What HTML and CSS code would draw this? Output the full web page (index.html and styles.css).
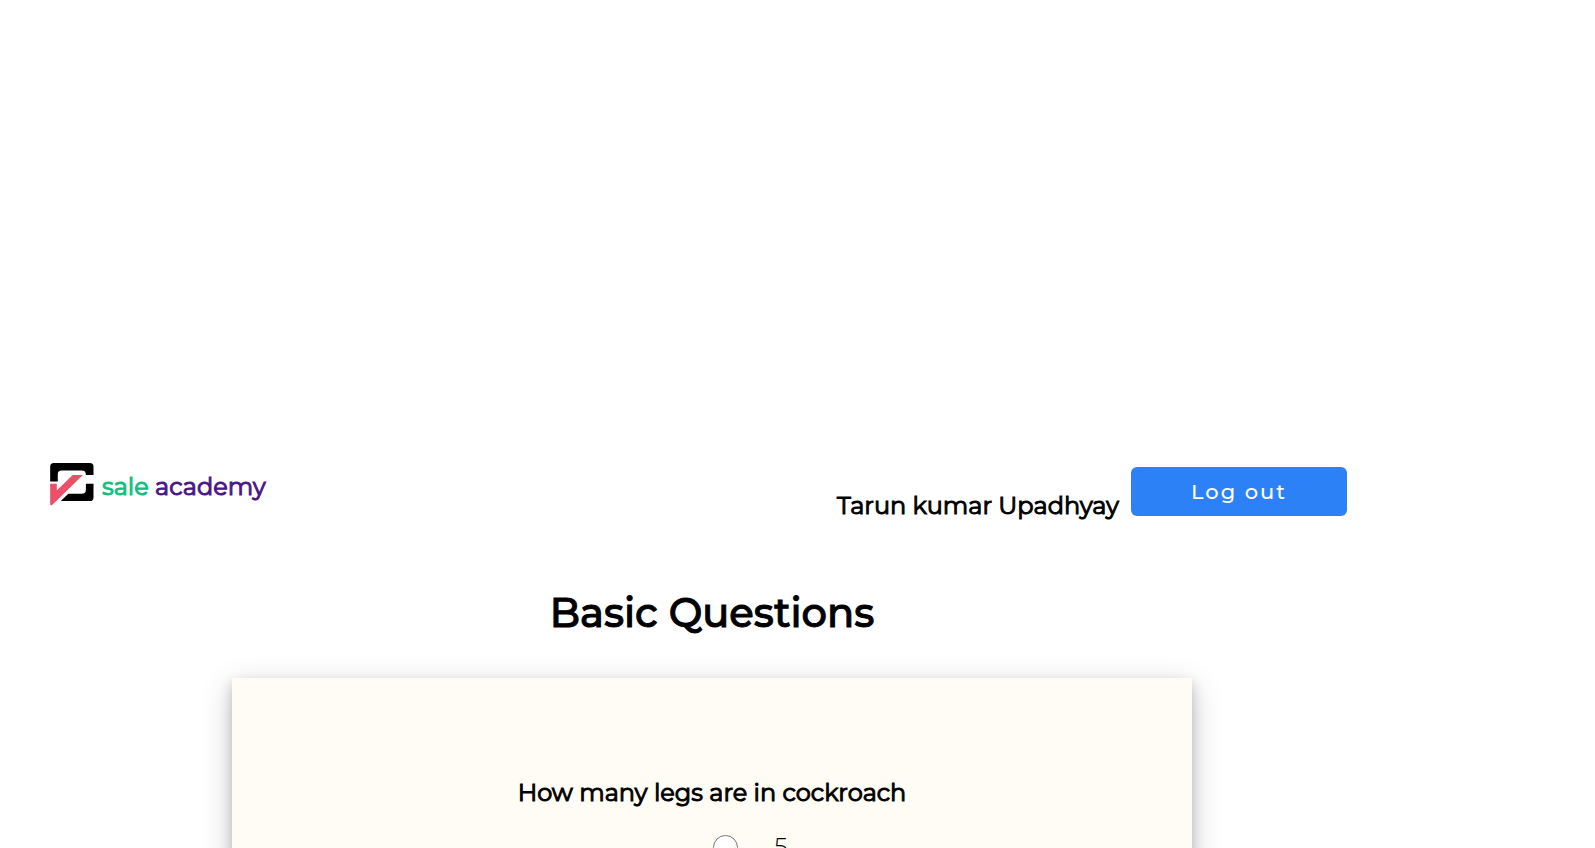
FILE: index.html
```html
<!DOCTYPE html>
<html lang="en">
<head>
<meta charset="utf-8">
<title>Sale Academy</title>
<meta name="viewport" content="width=device-width, initial-scale=1">
<link rel="stylesheet" href="styles.css">
</head>
<body>
<header class="header">
  <a class="brand" href="#">
    <svg class="brand-mark" viewBox="0 0 132 130" aria-hidden="true">
      <path fill="#000" d="M0 56V11Q0 0 11 0H120Q131 0 131 11V36H108Q108 23 96 23H34Q23 23 23 34V56Z"/>
      <path fill="#ec5068" d="M0 63H20V83L68 36H99L6 127Q0 130 0 124Z"/>
      <path fill="#000" d="M32 115L55 93H96Q108 93 108 81V63H131V104Q131 115 120 115Z"/>
    </svg>
    <span class="brand-name"><span class="brand-accent">sale</span> academy</span>
  </a>
  <div class="account">
    <span class="user-name">Tarun kumar Upadhyay</span>
    <button class="logout" type="button">Log out</button>
  </div>
</header>
<main class="main">
  <h1 class="title">Basic Questions</h1>
  <fieldset class="card">
    <legend class="question">How many legs are in cockroach</legend>
    <label class="option"><input class="radio" type="radio" name="legs" value="5"><span>5</span></label>
  </fieldset>
</main>
</body>
</html>
```
FILE: styles.css
```css
* {
  box-sizing: border-box;
}

html {
  overflow: hidden;
}

body {
  margin: 0;
  padding: 463px 171px 0 0;
  background: #fff;
  color: #000;
  font-family: Montserrat, Inter, sans-serif;
  font-size: 24px;
}

.header {
  display: flex;
  justify-content: space-between;
  align-items: flex-start;
  padding: 0 77px 0 50px;
}

.brand {
  display: flex;
  align-items: flex-start;
  gap: 8px;
  color: #4b1688;
  line-height: 48px;
  text-decoration: none;
}

.brand-mark {
  width: 44px;
  height: 43px;
}

.brand-accent {
  color: #13bf80;
}

.brand-name,
.user-name,
.title,
.question {
  font-weight: 400;
  -webkit-text-stroke: 1px currentColor;
}

.account {
  display: flex;
  gap: 12px;
  padding-top: 4px;
}

.user-name {
  padding-top: 24px;
  line-height: 30px;
}

.logout {
  width: 216px;
  height: 49px;
  border: 0;
  border-radius: 6px;
  background: #2d81f7;
  color: #fff;
  font: 500 21px/24px Montserrat, Inter, sans-serif;
  letter-spacing: 2px;
}

.main {
  display: flex;
  flex-direction: column;
  align-items: center;
}

.title {
  margin: 66px 0 39px;
  font-size: 40px;
  font-weight: 500;
  line-height: 52px;
}

.card {
  width: 960px;
  max-width: 90%;
  min-height: 400px;
  margin: 0;
  padding: 100px 48px 48px;
  border: 0;
  background: #fffcf5;
  box-shadow: 0 6px 12px rgba(0, 0, 0, 0.2), 0 9px 30px rgba(0, 0, 0, 0.19);
}

.question {
  float: left;
  width: 100%;
  padding: 0;
  line-height: 30px;
  text-align: center;
}

.option {
  display: flex;
  clear: both;
  justify-content: center;
  align-items: center;
  gap: 36px;
  padding: 23px 0 0 77px;
  font-weight: 300;
  line-height: 32px;
}

.radio {
  appearance: none;
  width: 25px;
  height: 25px;
  margin: 0;
  border: 1px solid #767676;
  border-radius: 50%;
  background: #fff;
}

.radio:checked {
  border: 7px solid #2d81f7;
}
```
